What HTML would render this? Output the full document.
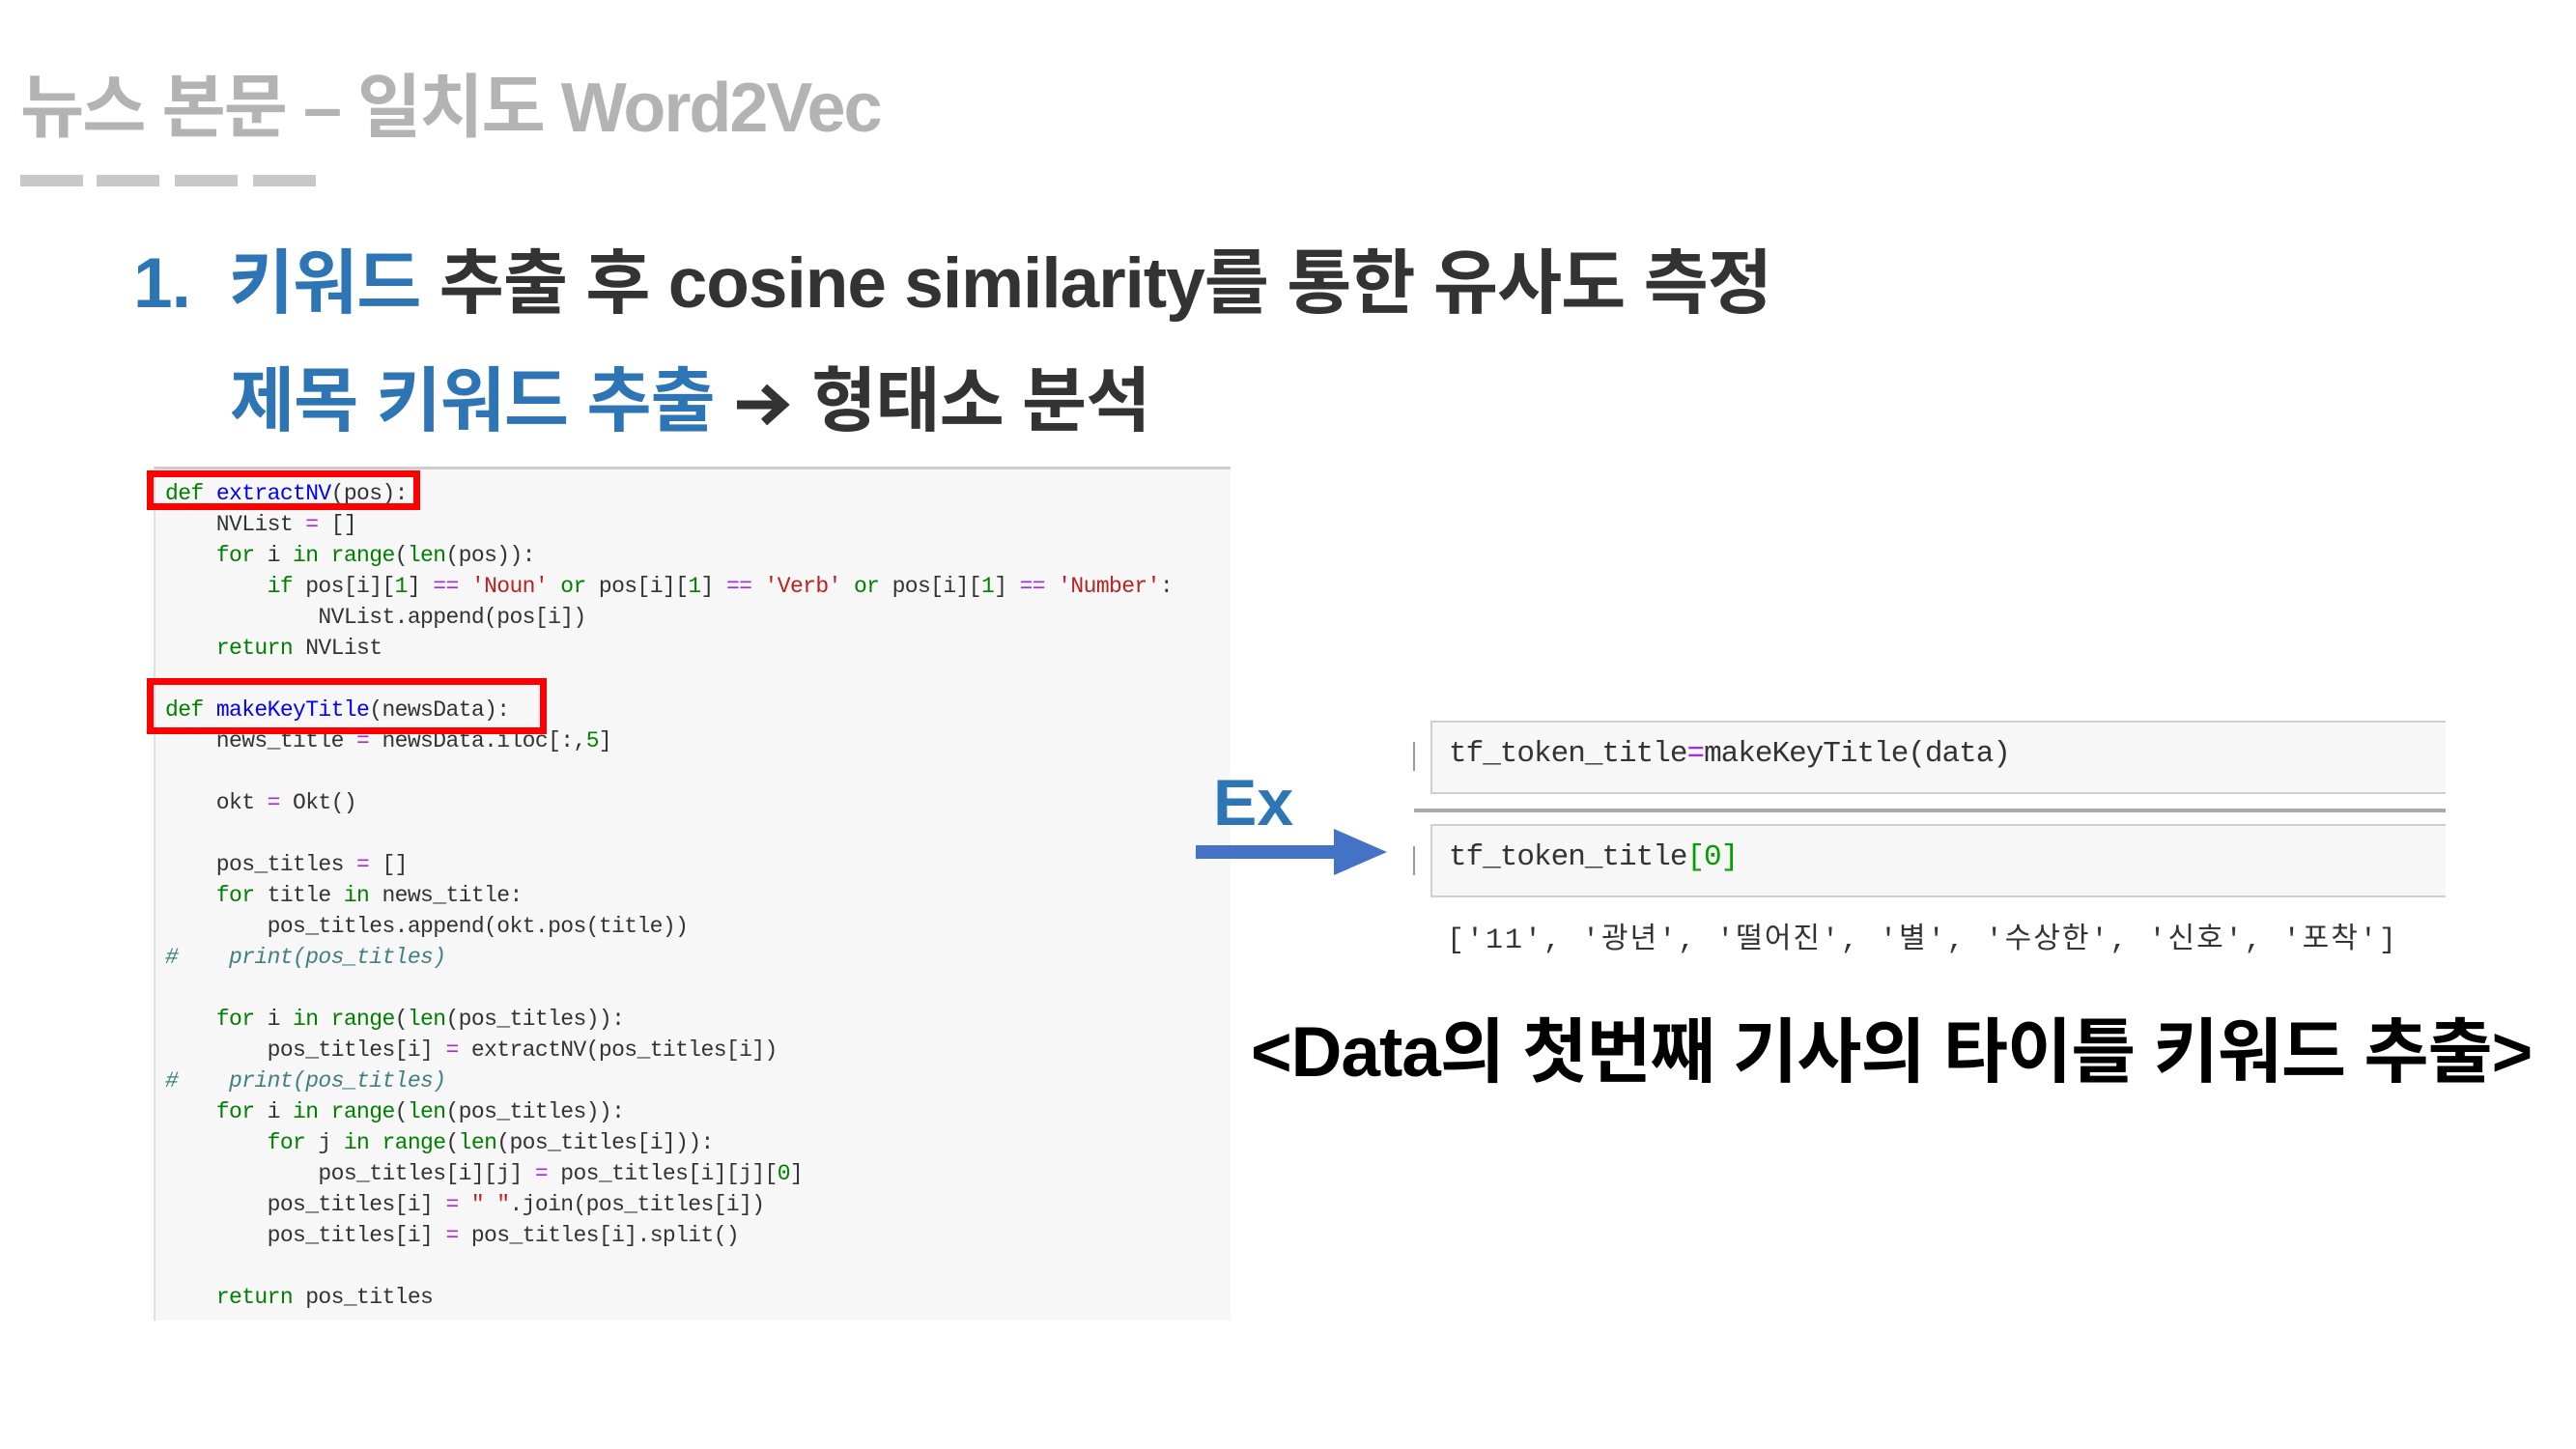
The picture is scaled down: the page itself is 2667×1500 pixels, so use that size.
<!DOCTYPE html>
<html><head><meta charset="utf-8"><style>
*{margin:0;padding:0;box-sizing:border-box}
body{width:2667px;height:1500px;background:#fff;position:relative;overflow:hidden;font-family:"Liberation Sans","Noto Sans CJK KR",sans-serif}
.a{position:absolute;white-space:nowrap}
.t{font-weight:bold;color:#b3b3b3;font-size:72px;left:21px;top:52px;letter-spacing:-2px}
.d{position:absolute;top:181px;height:12px;background:#c8c8c8;width:65px}
.h{font-weight:bold;font-size:73px;color:#333;letter-spacing:-1px}
.b{color:#2e75b6}
.code{position:absolute;left:159px;top:483px;width:1115px;height:884px;background:#f7f7f7;border-top:3px solid #ccc;border-left:2px solid #e0e0e0}
.cl{position:absolute;left:171px;font-family:"Liberation Mono","Noto Sans CJK KR",monospace;font-size:23px;color:#333;white-space:pre;letter-spacing:-0.6px;line-height:32px}
.k{color:#008000}.f{color:#0000ff}.s{color:#ba2121}.o{color:#aa22ff}.n{color:#008000}.c{color:#408080;font-style:italic}
.rb{position:absolute;border:7px solid #f00}
.cell{position:absolute;left:1481px;width:1051px;height:76px;background:#f7f7f7;border:2px solid #cfcfcf;border-right:none}
.ct{position:absolute;left:1500px;font-family:"Liberation Mono","Noto Sans CJK KR",monospace;font-size:31px;color:#333;white-space:pre;letter-spacing:-1px}
</style></head><body>
<div class="a t">뉴스 본문 – 일치도 Word2Vec</div>
<div class="d" style="left:21px"></div><div class="d" style="left:100px"></div><div class="d" style="left:181px"></div><div class="d" style="left:262px"></div>
<div class="a h" style="left:138px;top:234px"><span class="b">1.</span><span class="b" style="margin-left:40px">키워드</span> 추출 후 cosine similarity를 통한 유사도 측정</div>
<div class="a h" style="left:238px;top:356px"><span class="b">제목 키워드 추출</span> <svg width="62" height="50" viewBox="0 0 62 50" style="vertical-align:-4px"><path d="M4 25 H50 M32 7 L52 25 L32 43" stroke="#333" stroke-width="9" fill="none"/></svg> 형태소 분석</div>

<div class="code"></div>
<div class="cl" style="top:495px"><span class="k">def</span> <span class="f">extractNV</span>(pos):
    NVList <span class="o">=</span> []
    <span class="k">for</span> i <span class="k">in</span> <span class="k">range</span>(<span class="k">len</span>(pos)):
        <span class="k">if</span> pos[i][<span class="n">1</span>] <span class="o">==</span> <span class="s">'Noun'</span> <span class="k">or</span> pos[i][<span class="n">1</span>] <span class="o">==</span> <span class="s">'Verb'</span> <span class="k">or</span> pos[i][<span class="n">1</span>] <span class="o">==</span> <span class="s">'Number'</span>:
            NVList.append(pos[i])
    <span class="k">return</span> NVList

<span class="k">def</span> <span class="f">makeKeyTitle</span>(newsData):
    news_title <span class="o">=</span> newsData.iloc[:,<span class="n">5</span>]

    okt <span class="o">=</span> Okt()

    pos_titles <span class="o">=</span> []
    <span class="k">for</span> title <span class="k">in</span> news_title:
        pos_titles.append(okt.pos(title))
<span class="c">#    print(pos_titles)</span>

    <span class="k">for</span> i <span class="k">in</span> <span class="k">range</span>(<span class="k">len</span>(pos_titles)):
        pos_titles[i] <span class="o">=</span> extractNV(pos_titles[i])
<span class="c">#    print(pos_titles)</span>
    <span class="k">for</span> i <span class="k">in</span> <span class="k">range</span>(<span class="k">len</span>(pos_titles)):
        <span class="k">for</span> j <span class="k">in</span> <span class="k">range</span>(<span class="k">len</span>(pos_titles[i])):
            pos_titles[i][j] <span class="o">=</span> pos_titles[i][j][<span class="n">0</span>]
        pos_titles[i] <span class="o">=</span> <span class="s">" "</span>.join(pos_titles[i])
        pos_titles[i] <span class="o">=</span> pos_titles[i].split()

    <span class="k">return</span> pos_titles</div>
<div class="rb" style="left:152px;top:487px;width:283px;height:41px"></div>
<div class="rb" style="left:152px;top:702px;width:414px;height:58px"></div>

<div class="a" style="left:1256px;top:792px;font-weight:bold;font-size:68px;color:#2e75b6">Ex</div>
<svg class="a" style="left:1238px;top:856px" width="200" height="52"><rect x="0" y="19" width="145" height="14" fill="#4472c4"/><polygon points="143,2 198,26 143,50" fill="#4472c4"/></svg>

<div style="position:absolute;left:1463px;top:768px;width:2px;height:30px;background:#999"></div>
<div class="cell" style="top:746px"></div>
<div class="ct" style="top:763px">tf_token_title<span class="o">=</span>makeKeyTitle(data)</div>
<div style="position:absolute;left:1464px;top:837px;width:1068px;height:4px;background:#aaa"></div>
<div style="position:absolute;left:1463px;top:876px;width:2px;height:30px;background:#999"></div>
<div class="cell" style="top:853px"></div>
<div class="ct" style="top:870px">tf_token_title<span style="color:#00a000">[0]</span></div>
<div class="ct" style="left:1498px;top:946px;font-size:30px;letter-spacing:2px">['11', '광년', '떨어진', '별', '수상한', '신호', '포착']</div>

<div class="a" style="left:1295px;top:1030px;font-weight:bold;font-size:73px;color:#000;letter-spacing:-1px">&lt;Data의 첫번째 기사의 타이틀 키워드 추출&gt;</div>
</body></html>
